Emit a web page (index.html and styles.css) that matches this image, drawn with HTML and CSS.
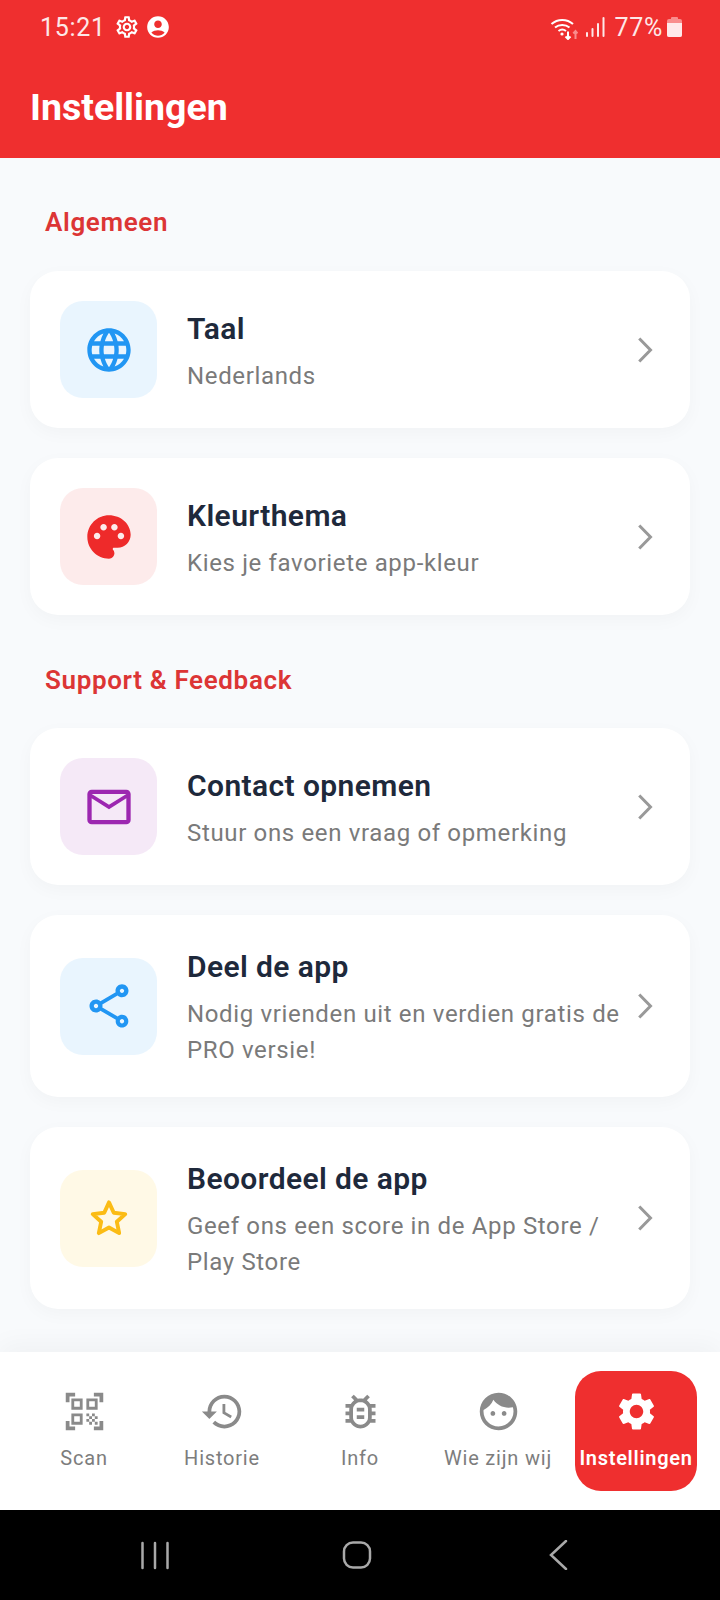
FILE: index.html
```html
<!DOCTYPE html>
<html lang="nl">
<head>
    <meta charset="UTF-8">
    <title>Instellingen</title>
    <meta name="viewport" content="width=device-width, initial-scale=1.0">
    <link rel="stylesheet" href="styles.css">
</head>
<body>
    <div class="app">
        <header class="app-header">
            <div class="status-bar">
                <div class="status-left">
                    <span class="status-time">15:21</span>
                    <svg class="status-icon" viewBox="0 0 24 24"><path d="M19.43 12.98c.04-.32.07-.64.07-.98 0-.34-.03-.66-.07-.98l2.11-1.65c.19-.15.24-.42.12-.64l-2-3.46c-.09-.16-.26-.25-.44-.25-.06 0-.12.01-.17.03l-2.49 1c-.52-.4-1.08-.73-1.69-.98l-.38-2.65C14.46 2.18 14.25 2 14 2h-4c-.25 0-.46.18-.49.42l-.38 2.65c-.61.25-1.17.59-1.69.98l-2.49-1c-.06-.02-.12-.03-.18-.03-.17 0-.34.09-.43.25l-2 3.46c-.13.22-.07.49.12.64l2.11 1.65c-.04.32-.07.65-.07.98 0 .33.03.66.07.98l-2.11 1.65c-.19.15-.24.42-.12.64l2 3.46c.09.16.26.25.44.25.06 0 .12-.01.17-.03l2.49-1c.52.4 1.08.73 1.69.98l.38 2.65c.03.24.24.42.49.42h4c.25 0 .46-.18.49-.42l.38-2.65c.61-.25 1.17-.59 1.69-.98l2.49 1c.06.02.12.03.18.03.17 0 .34-.09.43-.25l2-3.46c.12-.22.07-.49-.12-.64l-2.11-1.65zm-1.98-1.71c.04.31.05.52.05.73 0 .21-.02.43-.05.73l-.14 1.13.89.7 1.08.84-.7 1.21-1.27-.51-1.04-.42-.9.68c-.43.32-.84.56-1.25.73l-1.06.43-.16 1.13-.2 1.35h-1.4l-.19-1.35-.16-1.13-1.06-.43c-.43-.18-.83-.41-1.23-.71l-.91-.7-1.06.43-1.27.51-.7-1.21 1.08-.84.89-.7-.14-1.13c-.03-.31-.05-.54-.05-.74s.02-.43.05-.73l.14-1.13-.89-.7-1.08-.84.7-1.21 1.27.51 1.04.42.9-.68c.43-.32.84-.56 1.25-.73l1.06-.43.16-1.13.2-1.35h1.39l.19 1.35.16 1.13 1.06.43c.43.18.83.41 1.23.71l.91.7 1.06-.43 1.27-.51.7 1.21-1.07.85-.89.7.14 1.13zM12 8c-2.21 0-4 1.79-4 4s1.79 4 4 4 4-1.79 4-4-1.79-4-4-4zm0 6c-1.1 0-2-.9-2-2s.9-2 2-2 2 .9 2 2-.9 2-2 2z"/></svg>
                    <svg class="status-icon" viewBox="0 0 24 24"><path d="M12 2C6.48 2 2 6.48 2 12s4.48 10 10 10 10-4.48 10-10S17.52 2 12 2zm0 4c1.93 0 3.5 1.57 3.5 3.5S13.93 13 12 13s-3.5-1.57-3.5-3.5S10.07 6 12 6zm0 14c-2.03 0-4.43-.82-6.14-2.88C7.55 15.8 9.68 15 12 15s4.45.8 6.14 2.12C16.43 19.18 14.03 20 12 20z"/></svg>
                </div>
                <div class="status-right">
                    <svg class="wifi-icon" viewBox="0 0 28 24">
                        <path class="wifi-arc" d="M1.500 8 C7.500 2.500 17 2.500 23 8"/>
                        <path class="wifi-arc" d="M5 11.500 C9 8 15.500 8 19.500 11.500"/>
                        <path class="wifi-arc" d="M8.500 15 C11 13 13.500 13 16 15"/>
                        <circle class="wifi-dot" cx="12" cy="18" r="1.600"/>
                        <path class="wifi-down" d="M18 15.500v7.500M15.500 20.500l2.500 2.500 2.500-2.500"/>
                        <path class="wifi-up" d="M25.500 23v-8M23.300 17.500l2.200-2.500 2 2.500"/>
                    </svg>
                    <svg class="signal-icon" viewBox="0 0 20 22">
                        <rect x="1" y="16" width="2" height="5" rx="1"/>
                        <rect x="6.500" y="12" width="2" height="9" rx="1"/>
                        <rect x="12" y="7" width="2" height="14" rx="1"/>
                        <rect x="17.500" y="1" width="2" height="20" rx="1"/>
                    </svg>
                    <span class="status-battery-text">77%</span>
                    <div class="battery">
                        <div class="battery-cap"></div>
                        <div class="battery-body"><div class="battery-level"></div></div>
                    </div>
                </div>
            </div>
            <h1 class="app-title">Instellingen</h1>
        </header>

        <main class="content">
            <h2 class="section-title first">Algemeen</h2>

            <div class="card">
                <div class="card-icon bg-blue">
                    <svg class="icon blue" viewBox="0 0 24 24"><path d="M11.990 2C6.470 2 2 6.480 2 12s4.470 10 9.990 10C17.520 22 22 17.520 22 12S17.520 2 11.990 2zm6.930 6h-2.950c-.32-1.250-.78-2.450-1.380-3.560 1.840.63 3.370 1.910 4.330 3.560zM12 4.040c.83 1.200 1.480 2.530 1.910 3.960h-3.820c.43-1.430 1.080-2.760 1.910-3.960zM4.260 14C4.100 13.360 4 12.690 4 12s.1-1.360.26-2h3.380c-.08.66-.14 1.320-.14 2 0 .68.06 1.340.14 2H4.260zm.82 2h2.950c.32 1.250.78 2.450 1.380 3.560-1.840-.63-3.370-1.900-4.330-3.560zm2.950-8H5.080c.96-1.660 2.490-2.930 4.330-3.560C8.810 5.550 8.350 6.750 8.030 8zM12 19.960c-.83-1.200-1.480-2.530-1.910-3.960h3.820c-.43 1.430-1.080 2.760-1.910 3.960zM14.340 14H9.660c-.09-.66-.16-1.320-.16-2 0-.68.07-1.350.16-2h4.680c.09.65.16 1.320.16 2 0 .68-.07 1.340-.16 2zm.25 5.560c.6-1.110 1.060-2.310 1.380-3.560h2.950c-.96 1.650-2.490 2.930-4.330 3.560zM16.360 14c.08-.66.14-1.320.14-2 0-.68-.06-1.340-.14-2h3.380c.16.64.26 1.310.26 2s-.1 1.360-.26 2h-3.380z"/></svg>
                </div>
                <div class="card-text">
                    <div class="card-title">Taal</div>
                    <div class="card-sub">Nederlands</div>
                </div>
                <svg class="chevron" viewBox="0 0 24 24"><path d="M7.500 4.300 15 12l-7.500 7.700"/></svg>
            </div>

            <div class="card">
                <div class="card-icon bg-red">
                    <svg class="icon red" viewBox="0 0 24 24"><path d="M12 2C6.490 2 2 6.490 2 12s4.490 10 10 10c1.380 0 2.500-1.120 2.500-2.500 0-.61-.23-1.200-.64-1.670-.08-.1-.13-.21-.13-.33 0-.28.22-.5.5-.5H16c3.310 0 6-2.690 6-6 0-4.960-4.490-9-10-9zm5.500 11c-.83 0-1.500-.67-1.500-1.500s.67-1.500 1.500-1.500 1.500.67 1.500 1.500-.67 1.500-1.500 1.500zm-3-4c-.83 0-1.500-.67-1.500-1.500S13.670 6 14.500 6s1.500.67 1.500 1.500S15.330 9 14.500 9zM5 11.500c0-.83.67-1.500 1.500-1.500s1.500.67 1.500 1.500S7.330 13 6.500 13 5 12.330 5 11.500zm6-4c0 .83-.67 1.500-1.500 1.500S8 8.330 8 7.500 8.670 6 9.500 6s1.500.67 1.500 1.500z"/></svg>
                </div>
                <div class="card-text">
                    <div class="card-title">Kleurthema</div>
                    <div class="card-sub">Kies je favoriete app-kleur</div>
                </div>
                <svg class="chevron" viewBox="0 0 24 24"><path d="M7.500 4.300 15 12l-7.500 7.700"/></svg>
            </div>

            <h2 class="section-title">Support &amp; Feedback</h2>

            <div class="card">
                <div class="card-icon bg-purple">
                    <svg class="icon purple" viewBox="0 0 24 24"><path d="M20 4H4c-1.100 0-1.990.9-1.990 2L2 18c0 1.100.9 2 2 2h16c1.100 0 2-.9 2-2V6c0-1.100-.9-2-2-2zm0 14H4V8l8 5 8-5v10zm-8-7L4 6h16l-8 5z"/></svg>
                </div>
                <div class="card-text">
                    <div class="card-title">Contact opnemen</div>
                    <div class="card-sub">Stuur ons een vraag of opmerking</div>
                </div>
                <svg class="chevron" viewBox="0 0 24 24"><path d="M7.500 4.300 15 12l-7.500 7.700"/></svg>
            </div>

            <div class="card">
                <div class="card-icon bg-blue">
                    <svg class="icon blue" viewBox="0 0 24 24"><path d="M18 16.080c-.76 0-1.440.3-1.960.77L8.910 12.700c.05-.23.09-.46.09-.7s-.04-.47-.09-.7l7.050-4.110c.54.5 1.250.81 2.040.81 1.660 0 3-1.340 3-3s-1.340-3-3-3-3 1.340-3 3c0 .24.04.47.09.7L8.040 9.810C7.500 9.310 6.790 9 6 9c-1.660 0-3 1.340-3 3s1.340 3 3 3c.79 0 1.500-.31 2.040-.81l7.120 4.160c-.05.21-.08.43-.08.65 0 1.610 1.310 2.920 2.920 2.920s2.920-1.310 2.920-2.920c0-1.610-1.310-2.920-2.920-2.920zM18 4c.55 0 1 .45 1 1s-.45 1-1 1-1-.45-1-1 .45-1 1-1zM6 13c-.55 0-1-.45-1-1s.45-1 1-1 1 .45 1 1-.45 1-1 1zm12 7.020c-.55 0-1-.45-1-1s.45-1 1-1 1 .45 1 1-.45 1-1 1z"/></svg>
                </div>
                <div class="card-text">
                    <div class="card-title">Deel de app</div>
                    <div class="card-sub">Nodig vrienden uit en verdien gratis de PRO versie!</div>
                </div>
                <svg class="chevron" viewBox="0 0 24 24"><path d="M7.500 4.300 15 12l-7.500 7.700"/></svg>
            </div>

            <div class="card">
                <div class="card-icon bg-yellow">
                    <svg class="icon star" viewBox="0 0 24 24"><path d="M12 4.800 14.200 9.600 19.500 10.200 15.600 13.700 16.700 19 12 16.400 7.300 19 8.400 13.700 4.500 10.200 9.800 9.600z"/></svg>
                </div>
                <div class="card-text">
                    <div class="card-title">Beoordeel de app</div>
                    <div class="card-sub">Geef ons een score in de App Store / Play Store</div>
                </div>
                <svg class="chevron" viewBox="0 0 24 24"><path d="M7.500 4.300 15 12l-7.500 7.700"/></svg>
            </div>
        </main>

        <nav class="tab-bar">
            <div class="tab">
                <svg class="tab-icon" viewBox="0 0 24 24"><path d="M9.500 6.500v3h-3v-3h3M11 5H5v6h6V5zm-1.500 9.500v3h-3v-3h3M11 13H5v6h6v-6zm6.500-6.500v3h-3v-3h3M19 5h-6v6h6V5zm-6 8h1.500v1.500H13V13zm1.500 1.500H16V16h-1.500v-1.500zM16 13h1.500v1.500H16V13zm-3 3h1.500v1.500H13V16zm1.500 1.500H16V19h-1.500v-1.500zM16 16h1.500v1.500H16V16zm1.500-1.500H19V16h-1.500v-1.500zm0 3H19V19h-1.500v-1.500zM22 7h-2V4h-3V2h5v5zm0 15v-5h-2v3h-3v2h5zM2 22h5v-2H4v-3H2v5zM2 2v5h2V4h3V2H2z"/></svg>
                <span class="tab-label">Scan</span>
            </div>
            <div class="tab">
                <svg class="tab-icon" viewBox="0 0 24 24"><path d="M13 3c-4.970 0-9 4.030-9 9H1l3.890 3.890.07.14L9 12H6c0-3.870 3.130-7 7-7s7 3.130 7 7-3.130 7-7 7c-1.930 0-3.680-.79-4.940-2.060l-1.420 1.420C8.270 19.990 10.510 21 13 21c4.970 0 9-4.030 9-9s-4.030-9-9-9zm-1 5v5l4.280 2.540.72-1.210-3.500-2.080V8H12z"/></svg>
                <span class="tab-label">Historie</span>
            </div>
            <div class="tab">
                <svg class="tab-icon" viewBox="0 0 24 24"><path d="M20 8h-2.810c-.45-.78-1.070-1.450-1.820-1.960L17 4.410 15.590 3l-2.170 2.170C12.960 5.060 12.490 5 12 5c-.49 0-.96.06-1.410.17L8.410 3 7 4.410l1.620 1.630C7.880 6.550 7.260 7.220 6.810 8H4v2h2.090c-.05.33-.09.66-.09 1v1H4v2h2v1c0 .34.04.67.09 1H4v2h2.810c1.040 1.790 2.970 3 5.190 3s4.150-1.210 5.190-3H20v-2h-2.090c.05-.33.09-.66.09-1v-1h2v-2h-2v-1c0-.34-.04-.67-.09-1H20V8zm-4 4v3c0 .22-.03.47-.07.7l-.1.65-.37.65c-.72 1.240-2.040 2-3.460 2s-2.740-.77-3.460-2l-.37-.64-.1-.65C8.030 15.480 8 15.230 8 15v-4c0-.23.03-.48.07-.7l.1-.65.37-.65c.3-.52.72-.97 1.210-1.310l.57-.39.74-.18c.31-.08.63-.12.94-.12.32 0 .63.04.95.12l.68.16.61.42c.5.34.91.78 1.210 1.310l.38.65.1.65c.04.22.07.47.07.69v1zm-6 2h4v2h-4zm0-4h4v2h-4z"/></svg>
                <span class="tab-label">Info</span>
            </div>
            <div class="tab">
                <svg class="tab-icon" viewBox="0 0 24 24"><path d="M9 11.750c-.69 0-1.250.56-1.250 1.250s.56 1.250 1.250 1.250 1.250-.56 1.250-1.250-.56-1.250-1.250-1.250zm6 0c-.69 0-1.250.56-1.250 1.250s.56 1.250 1.250 1.250 1.250-.56 1.250-1.250-.56-1.250-1.250-1.250zM12 2C6.480 2 2 6.480 2 12s4.480 10 10 10 10-4.480 10-10S17.520 2 12 2zm0 18c-4.410 0-8-3.590-8-8 0-.29.02-.58.05-.86 2.360-1.050 4.230-2.980 5.210-5.370C11.070 8.330 14.050 10 17.420 10c.78 0 1.530-.09 2.250-.26.21.71.33 1.470.33 2.260 0 4.410-3.590 8-8 8z"/></svg>
                <span class="tab-label">Wie zijn wij</span>
            </div>
            <div class="tab active">
                <svg class="tab-icon" viewBox="0 0 24 24"><path d="M19.140 12.940c.04-.3.06-.61.06-.94 0-.32-.02-.64-.07-.94l2.030-1.580c.18-.14.23-.41.12-.61l-1.920-3.320c-.12-.22-.37-.29-.59-.22l-2.390.96c-.5-.38-1.030-.7-1.620-.94l-.36-2.540c-.04-.24-.24-.41-.48-.41h-3.840c-.24 0-.43.17-.47.41l-.36 2.540c-.59.24-1.130.57-1.620.94l-2.390-.96c-.22-.08-.47 0-.59.22L2.740 8.870c-.12.21-.08.47.12.61l2.030 1.580c-.05.3-.09.63-.09.94s.02.64.07.94l-2.030 1.580c-.18.14-.23.41-.12.61l1.920 3.320c.12.22.37.29.59.22l2.390-.96c.5.38 1.030.7 1.620.94l.36 2.540c.05.24.24.41.48.41h3.840c.24 0 .44-.17.47-.41l.36-2.540c.59-.24 1.130-.56 1.620-.94l2.390.96c.22.08.47 0 .59-.22l1.920-3.320c.12-.22.07-.47-.12-.61l-2.010-1.580zM12 15.600c-1.980 0-3.600-1.620-3.600-3.600s1.620-3.600 3.600-3.600 3.600 1.620 3.600 3.600-1.620 3.600-3.600 3.600z"/></svg>
                <span class="tab-label">Instellingen</span>
            </div>
        </nav>

        <div class="system-nav">
            <svg class="sys-icon" viewBox="0 0 30 30"><path d="M2.500 3v25M15 3v25M27.500 3v25"/></svg>
            <svg class="sys-icon" viewBox="0 0 30 30"><rect x="2" y="2.500" width="26" height="25" rx="9"/></svg>
            <svg class="sys-icon" viewBox="0 0 30 30"><path d="M22 1 7 15l15 14"/></svg>
        </div>
    </div>
</body>
</html>
```

FILE: styles.css
```css
* {
    box-sizing: border-box;
}

body {
    margin: 0;
    font-family: Roboto, "Noto Sans", sans-serif;
    background: #f8fafc;
}

.app {
    display: flex;
    flex-direction: column;
    width: 720px;
    height: 1600px;
    overflow: hidden;
}

/* red header with the phone status bar in it */
.app-header {
    height: 158px;
    padding: 0 30px;
    background: #ef2f2f;
    color: #fff;
    flex-shrink: 0;
}

.status-bar {
    display: flex;
    justify-content: space-between;
    align-items: center;
    height: 54px;
    padding: 0 8px 0 10px;
}

.status-left,
.status-right {
    display: flex;
    align-items: center;
}

.status-time,
.status-battery-text {
    font-size: 25px;
    letter-spacing: 0.7px;
    color: #fde8e8;
}

.status-icon {
    width: 26px;
    height: 26px;
    margin-left: 5px;
    fill: #fff;
}

.status-time + .status-icon {
    margin-left: 8px;
}

.wifi-icon {
    width: 28px;
    height: 24px;
    margin-top: 1px;
}

.wifi-arc,
.wifi-down,
.wifi-up {
    fill: none;
    stroke: #fff;
    stroke-width: 2;
}

.wifi-dot {
    fill: #fff;
}

.wifi-up {
    stroke: #f98d8d;
}

.signal-icon {
    width: 20px;
    height: 22px;
    margin-left: 7px;
    fill: #fde8e8;
}

.status-battery-text {
    margin-left: 9px;
}

.battery {
    display: flex;
    flex-direction: column;
    align-items: center;
    width: 15px;
    margin-left: 4px;
}

.battery-cap {
    width: 7px;
    height: 2px;
    background: #f98d8d;
    border-radius: 1px 1px 0 0;
}

.battery-body {
    display: flex;
    flex-direction: column;
    justify-content: flex-end;
    width: 15px;
    height: 18px;
    background: #f98d8d;
    border-radius: 2px;
    overflow: hidden;
}

.battery-level {
    height: 77%;
    background: #ffe9ea;
}

.app-title {
    margin: 31px 0 0;
    font-size: 37.5px;
    line-height: 44px;
    font-weight: 700;
}

.content {
    flex: 1;
    padding: 0 30px;
    overflow: hidden;
}

.section-title {
    margin: 48px 0 31px 15px;
    font-size: 26px;
    line-height: 34px;
    font-weight: 600;
    letter-spacing: 0.65px;
    color: #dc3535;
}

.section-title.first {
    margin-top: 47px;
    margin-bottom: 32px;
}

.card {
    display: flex;
    align-items: center;
    padding: 30px;
    margin-bottom: 30px;
    background: #fff;
    border-radius: 28px;
    box-shadow: 0 5px 18px rgba(15, 23, 42, 0.03);
}

.card-icon {
    display: flex;
    align-items: center;
    justify-content: center;
    width: 97px;
    height: 97px;
    border-radius: 23px;
    flex-shrink: 0;
}

.bg-blue { background: #e9f5fe; }
.bg-red { background: #fdebeb; }
.bg-purple { background: #f5e9f7; }
.bg-yellow { background: #fff9e6; }

.icon {
    width: 52px;
    height: 52px;
}

.blue { fill: #2196f3; }
.red { fill: #ee2a2a; }
.purple { fill: #9c27b0; }

.star {
    fill: none;
    stroke: #fbbc15;
    stroke-width: 1.8;
    stroke-linejoin: round;
}

.card-text {
    flex: 1;
    min-width: 0;
    margin-left: 30px;
    padding-top: 1px;
    margin-bottom: -1px;
}

.card-title {
    font-size: 30px;
    line-height: 42px;
    font-weight: 600;
    letter-spacing: 0.4px;
    color: #1e293b;
}

.card-sub {
    margin-top: 8px;
    font-size: 24px;
    line-height: 36px;
    letter-spacing: 0.65px;
    color: #7a7a7a;
}

.chevron {
    width: 36px;
    height: 36px;
    margin-right: -4px;
    flex-shrink: 0;
    fill: none;
    stroke: #999;
    stroke-width: 2;
}

/* bottom tabs */
.tab-bar {
    display: flex;
    height: 158px;
    padding: 19px 15px;
    background: #fff;
    box-shadow: 0 -8px 24px rgba(15, 23, 42, 0.035);
    position: relative;
    flex-shrink: 0;
}

.tab {
    display: flex;
    flex-direction: column;
    align-items: center;
    width: 138px;
    padding-top: 18px;
    border-radius: 26px;
    color: #7d7d7d;
}

.tab-icon {
    width: 45px;
    height: 45px;
    fill: #8a8a8a;
}

.tab-label {
    margin-top: 11px;
    font-size: 20px;
    line-height: 26px;
    letter-spacing: 0.8px;
    white-space: nowrap;
}

.tab.active {
    width: 122px;
    margin: 0 8px;
    background: #ef2f2f;
    color: #fff;
}

.tab.active .tab-icon {
    fill: #fff;
}

.tab.active .tab-label {
    font-weight: 600;
    letter-spacing: 0.7px;
}

/* android buttons */
.system-nav {
    display: flex;
    align-items: center;
    gap: 172px;
    height: 90px;
    padding-left: 140px;
    background: #000;
    flex-shrink: 0;
}

.sys-icon {
    width: 30px;
    height: 30px;
    fill: none;
    stroke: #a9a9a9;
    stroke-width: 2.5;
    stroke-linecap: round;
}
```
